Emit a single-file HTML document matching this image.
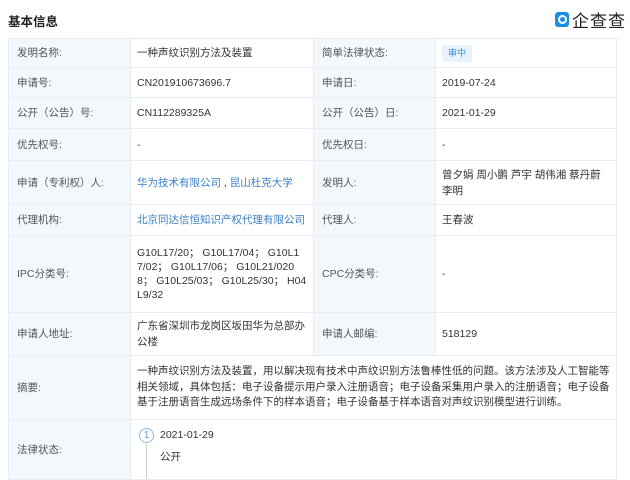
<!DOCTYPE html>
<html><head><meta charset="utf-8"><style>
body{margin:0;width:630px;height:472px;overflow:hidden;background:#fff;font-family:"Liberation Sans","Noto Sans CJK SC",sans-serif;font-size:10.5px;color:#333;position:relative}
.h{position:absolute;left:8px;top:11px;font-size:12.5px;font-weight:bold;color:#222}
.logo{position:absolute;left:555px;top:10px;height:18px;display:flex;align-items:center}
.logo .b{width:14px;height:15px;background:#1a8fe0;border-radius:3px;position:relative;margin-right:3px}
.logo .b:after{content:"";position:absolute;left:3px;top:3px;width:5px;height:5px;border:2px solid #fff;border-radius:50%}
.logo span{font-size:17px;color:#222;letter-spacing:1px}
table{position:absolute;left:8px;top:38px;width:608px;border-collapse:collapse;table-layout:fixed}
td{border:1px solid #e6edf4;padding:0 6px;vertical-align:middle;line-height:14px;overflow:hidden}
td.l{background:#f3f8fd;color:#555;padding-left:8px}
a{color:#3b7fc4;text-decoration:none}
.tag{display:inline-block;background:#e8f3fd;color:#3b8ad3;font-size:9px;padding:2px 6px;line-height:13px}
</style></head><body>
<div class="h">基本信息</div>
<div class="logo"><div class="b"></div><span>企查查</span></div>
<table>
<colgroup><col style="width:122px"><col style="width:183px"><col style="width:122px"><col style="width:181px"></colgroup>
<tr style="height:29px"><td class="l">发明名称:</td><td>一种声纹识别方法及装置</td><td class="l">简单法律状态:</td><td><span class="tag">审中</span></td></tr>
<tr style="height:30px"><td class="l">申请号:</td><td>CN201910673696.7</td><td class="l">申请日:</td><td>2019-07-24</td></tr>
<tr style="height:31px"><td class="l">公开（公告）号:</td><td>CN112289325A</td><td class="l">公开（公告）日:</td><td>2021-01-29</td></tr>
<tr style="height:32px"><td class="l">优先权号:</td><td>-</td><td class="l">优先权日:</td><td>-</td></tr>
<tr style="height:44px"><td class="l">申请（专利权）人:</td><td><a>华为技术有限公司</a> , <a>昆山杜克大学</a></td><td class="l">发明人:</td><td style="line-height:16px">曾夕娟 周小鹏 芦宇 胡伟湘 蔡丹蔚 李明</td></tr>
<tr style="height:31px"><td class="l">代理机构:</td><td><a>北京同达信恒知识产权代理有限公司</a></td><td class="l">代理人:</td><td>王春波</td></tr>
<tr style="height:77px"><td class="l">IPC分类号:</td><td style="word-break:break-all;line-height:14px">G10L17/20； G10L17/04； G10L17/02； G10L17/06； G10L21/0208； G10L25/03； G10L25/30； H04L9/32</td><td class="l">CPC分类号:</td><td>-</td></tr>
<tr style="height:43px"><td class="l">申请人地址:</td><td style="line-height:16px">广东省深圳市龙岗区坂田华为总部办公楼</td><td class="l">申请人邮编:</td><td>518129</td></tr>
<tr style="height:64px"><td class="l">摘要:</td><td colspan="3" style="line-height:15.5px">一种声纹识别方法及装置，用以解决现有技术中声纹识别方法鲁棒性低的问题。该方法涉及人工智能等相关领域，具体包括：电子设备提示用户录入注册语音；电子设备采集用户录入的注册语音；电子设备基于注册语音生成远场条件下的样本语音；电子设备基于样本语音对声纹识别模型进行训练。</td></tr>
<tr style="height:60px"><td class="l">法律状态:</td><td colspan="3" style="position:relative">
<div style="position:absolute;left:8px;top:8px;width:13px;height:13px;border:1px solid #8fb8dc;border-radius:50%;color:#6a9fcf;font-size:10px;text-align:center;line-height:13px">1</div>
<div style="position:absolute;left:15px;top:24px;width:1px;height:40px;background:#ccc"></div>
<div style="position:absolute;left:29px;top:8px">2021-01-29</div>
<div style="position:absolute;left:29px;top:30px">公开</div>
</td></tr>
</table>
</body></html>
